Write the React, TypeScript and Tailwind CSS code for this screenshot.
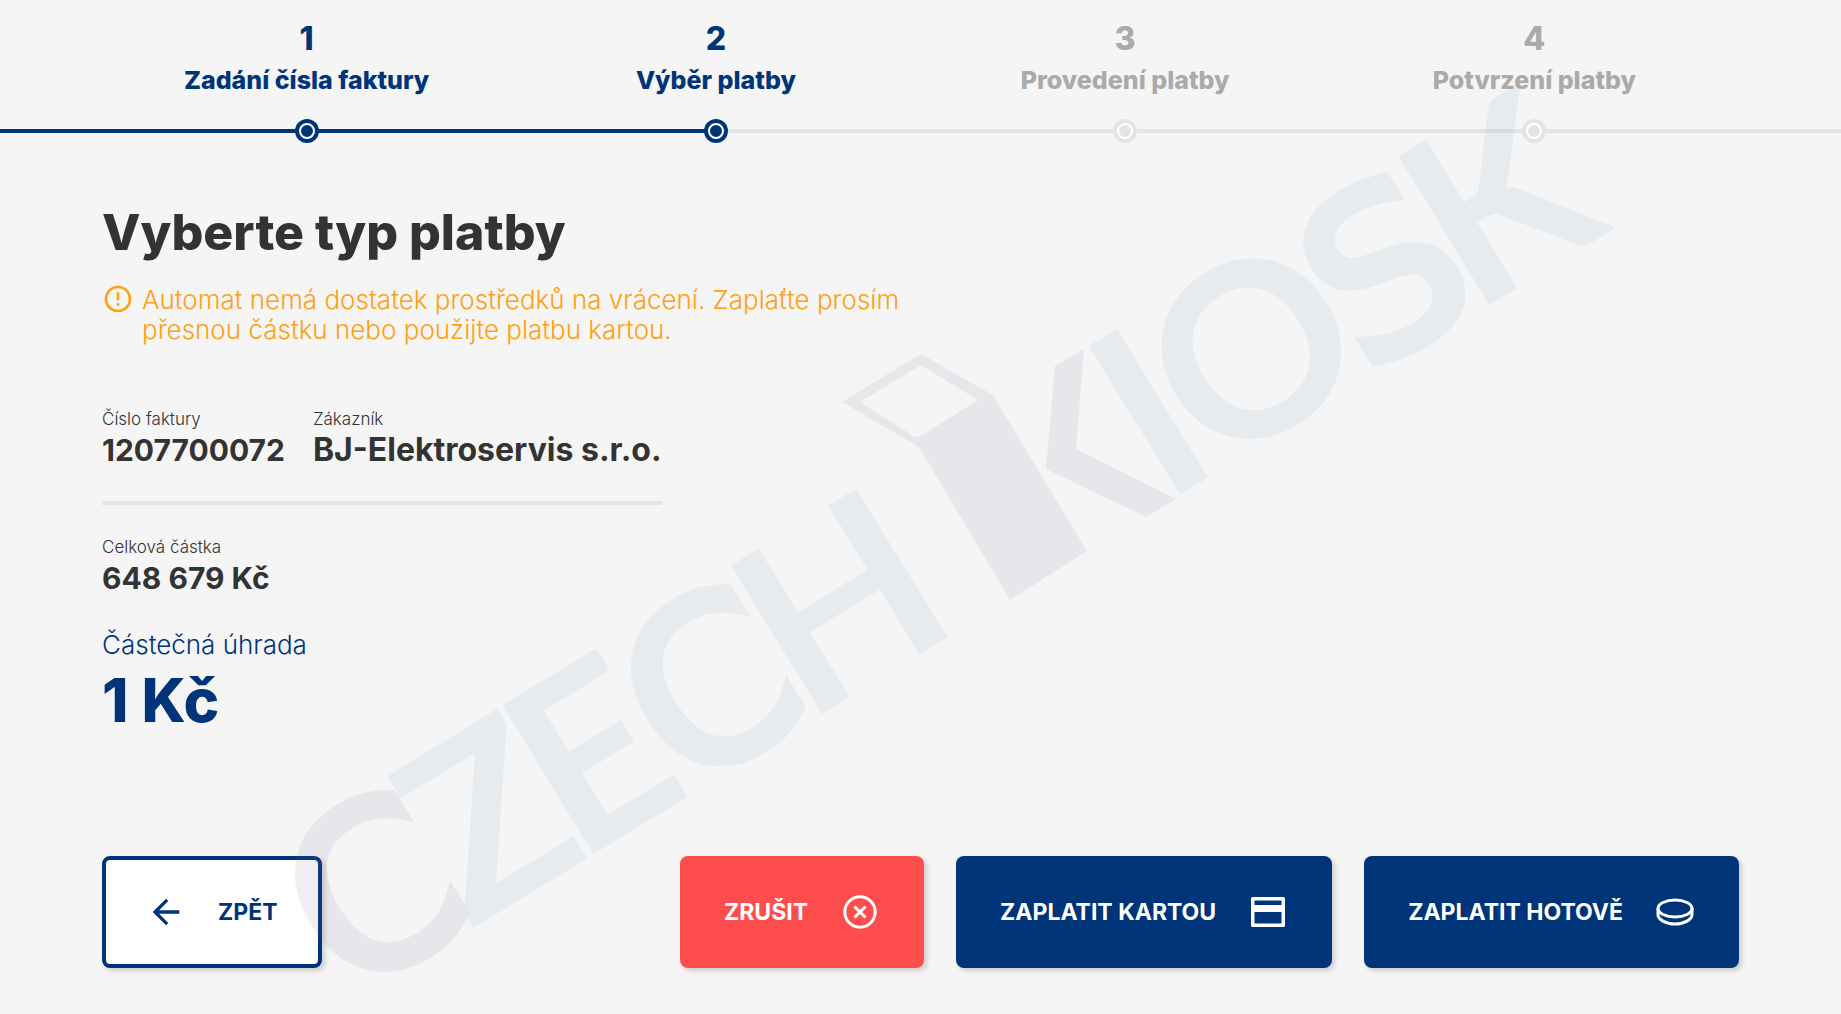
import React from 'react';
import { MdArrowBack, MdErrorOutline } from 'react-icons/md';

interface Step {
  label: string;
  done: boolean;
}

const steps: Step[] = [
  { label: 'Zadání čísla faktury', done: true },
  { label: 'Výběr platby', done: true },
  { label: 'Provedení platby', done: false },
  { label: 'Potvrzení platby', done: false },
];

const CancelIcon = () => (
  <svg viewBox="0 0 40 40" className="size-10" fill="none" stroke="currentColor" strokeWidth="3" aria-hidden="true">
    <circle cx="20" cy="20" r="15.2" />
    <path d="M14.5 14.5l11 11M25.5 14.5L14.5 25.5" />
  </svg>
);

const CardIcon = () => (
  <svg viewBox="0 0 40 40" className="size-10" fill="currentColor" aria-hidden="true">
    <path
      fillRule="evenodd"
      d="M4.5 5h31a1.5 1.5 0 0 1 1.5 1.5v27a1.5 1.5 0 0 1-1.5 1.5h-31A1.5 1.5 0 0 1 3 33.5v-27A1.5 1.5 0 0 1 4.5 5zM6.5 8.5V13h27V8.5zM6.5 20v11.5h27V20z"
    />
  </svg>
);

const CoinIcon = () => (
  <svg viewBox="0 0 40 40" className="size-10" fill="none" stroke="currentColor" strokeWidth="3" aria-hidden="true">
    <ellipse cx="20" cy="16.5" rx="17" ry="8.5" />
    <path d="M3 16.5v6c0 5 7.5 9.5 17 9.5s17-4.5 17-9.5v-6" />
  </svg>
);

const Steps: React.FC = () => (
  <header className="relative pt-5">
    {/* Progress line */}
    <div className="absolute inset-x-0 bottom-[10px] h-1 bg-[#e4e4e4]">
      <div className="h-full w-[39%] bg-[#003478]"></div>
    </div>

    <ol className="relative grid grid-cols-4 px-[102px]">
      {steps.map((step, index) => (
        <li
          key={step.label}
          className={`flex flex-col items-center font-extrabold ${step.done ? 'text-[#003478]' : 'text-[#aaaaaa]'}`}
        >
          <span className="text-[32px] leading-[38px]">{index + 1}</span>
          <span className="mt-1 text-[25px] leading-[36px]">{step.label}</span>
          <span
            className={`mt-[21px] flex size-6 items-center justify-center rounded-full ${step.done ? 'bg-[#003478]' : 'bg-[#e4e4e4]'}`}
          >
            <span className="size-4 rounded-full border-2 border-white"></span>
          </span>
        </li>
      ))}
    </ol>
  </header>
);

interface FieldProps {
  label: string;
  value: string;
  numeric?: boolean;
}

const Field: React.FC<FieldProps> = ({ label, value, numeric = false }) => (
  <div>
    <dt className="text-[17px] leading-6 font-light">{label}</dt>
    <dd className={`leading-[38px] font-bold ${numeric ? 'text-[30px]' : 'text-[32px]'}`}>{value}</dd>
  </div>
);

const Watermark: React.FC = () => (
  <svg
    viewBox="0 0 1841 1014"
    className="pointer-events-none absolute inset-0 h-full w-full opacity-10"
    aria-hidden="true"
  >
    <g transform="translate(287 1042) rotate(-31.5)" fill="#5f9bc3" stroke="#5f9bc3" strokeWidth="0">
      <g fontFamily="Lato, sans-serif" fontWeight="700" fontSize="241">
        <text x="214 340" y="0">ZE</text>
        <text x="608" y="0">H</text>
        <text x="1028 1087" y="0">IO</text>
        <text x="1391" y="0">K</text>
      </g>
      <g fontFamily="'DejaVu Sans', sans-serif" fontSize="224" strokeWidth="10">
        <text x="74" y="-5" fill="#736991" stroke="#736991">C</text>
        <text x="468" y="-5">C</text>
        <text x="1268" y="-5">S</text>
      </g>
    </g>
    <g fill="#736991">
      <path
        fillRule="evenodd"
        d="M842 402L921 354L989 393Q995 397 997 402L1087 551L1010 600L919 447ZM860 402L915 437H919L978 400L921 365Z"
      />
      <path d="M1055 366L1084 349L1076 449L1176 499L1146 517L1046 469Z" />
    </g>
  </svg>
);

const buttonBase =
  'flex h-28 items-center gap-8 rounded-lg text-[23px] leading-8 font-bold shadow-[3px_3px_5px_rgba(0,0,0,0.16)]';

const App: React.FC = () => {
  return (
    <div className="relative flex min-h-screen flex-col overflow-hidden bg-[#f5f5f5] font-['Inter',sans-serif] text-[#333333]">
      <Steps />

      <main className="px-[102px] pt-[57px]">
        <h1 className="text-[50px] leading-[64px] font-extrabold">Vyberte typ platby</h1>

        <div role="alert" className="mt-[19px] flex items-start gap-2 text-[#ffa012]">
          <MdErrorOutline className="size-8 shrink-0" />
          <p className="mt-0.5 max-w-[790px] text-[26px] leading-[30px] font-light">
            Automat nemá dostatek prostředků na vrácení. Zaplaťte prosím přesnou částku nebo použijte platbu kartou.
          </p>
        </div>

        <div className="mt-[62px] w-fit">
          <dl className="flex gap-7 border-b-4 border-[#e4e4e4] pb-8">
            <Field label="Číslo faktury" value="1207700072" numeric />
            <Field label="Zákazník" value="BJ-Elektroservis s.r.o." />
          </dl>
          <dl className="mt-[30px]">
            <Field label="Celková částka" value="648 679 Kč" numeric />
            <div className="mt-8 text-[#003478]">
              <dt className="text-[26px] leading-8 font-light">Částečná úhrada</dt>
              <dd className="text-[60px] leading-[78px] font-extrabold">1 Kč</dd>
            </div>
          </dl>
        </div>
      </main>

      {/* Actions */}
      <footer className="mt-auto flex justify-between px-[102px] pb-[46px]">
        <button type="button" className={`${buttonBase} border-4 border-[#003478] bg-white px-10 text-[#003478]`}>
          <MdArrowBack className="size-10" />
          ZPĚT
        </button>
        <div className="flex gap-8">
          <button type="button" className={`${buttonBase} bg-[#fe4d4d] px-11 text-white`}>
            ZRUŠIT
            <CancelIcon />
          </button>
          <button type="button" className={`${buttonBase} bg-[#003478] px-11 text-white`}>
            ZAPLATIT KARTOU
            <CardIcon />
          </button>
          <button type="button" className={`${buttonBase} bg-[#003478] px-11 text-white`}>
            ZAPLATIT HOTOVĚ
            <CoinIcon />
          </button>
        </div>
      </footer>

      <Watermark />
    </div>
  );
};

export default App;
